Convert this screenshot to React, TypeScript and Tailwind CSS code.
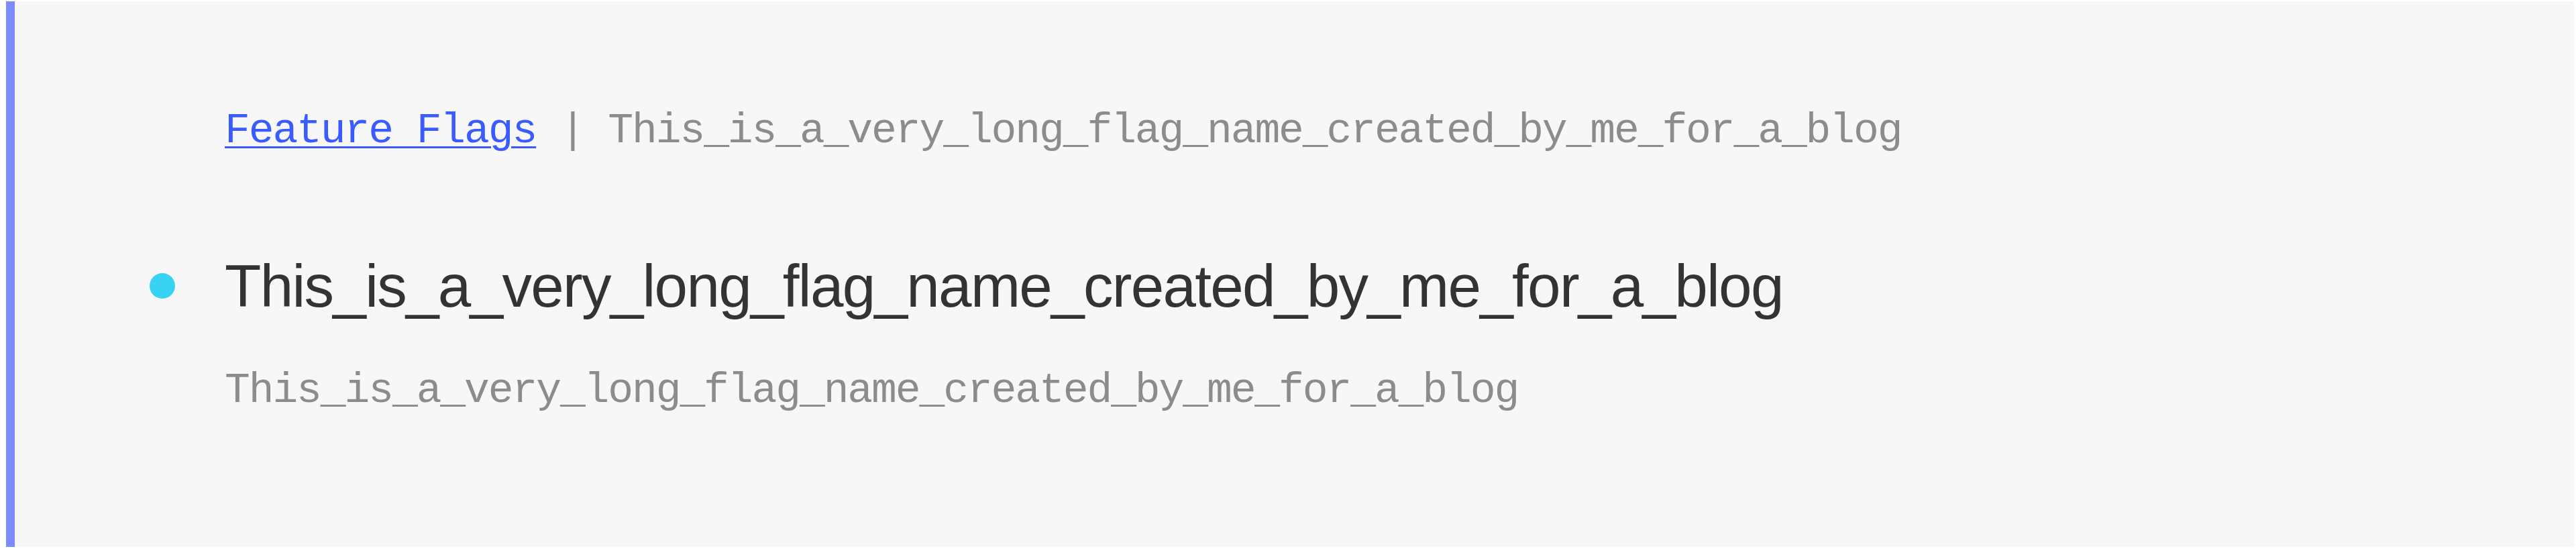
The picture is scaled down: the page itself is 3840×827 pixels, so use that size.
export default function App() {
  const name = "This_is_a_very_long_flag_name_created_by_me_for_a_blog";
  const mono = "font-['Liberation_Mono',_'DejaVu_Sans_Mono',_monospace] text-[63px] leading-[72px] tracking-[-2.1px]";
  return (
    <div className="bg-white pl-[9px] pr-[3px] pt-[2px] pb-[12px]">
      <div className="bg-[#f7f7f7] border-l-[13px] border-[#7c8cff] h-[813px] pl-[201px] pt-[158px]">
        <div className="grid grid-cols-[112px_1fr]">
          <div />
          <div className={`${mono} text-[#8c8c8c] whitespace-nowrap`}>
            <a href="#" className="text-[#3a5cff] underline decoration-[3px] underline-offset-[6px]">Feature Flags</a>
            <span> | {name}</span>
          </div>

          <div className="flex items-center mt-[144px]">
            <span className="block w-[38px] h-[38px] rounded-full bg-[#38d3f2]" />
          </div>
          <h1 className="mt-[144px] font-['Liberation_Sans',_Arial,_sans-serif] text-[89px] leading-[100px] tracking-[-1.7px] text-[#333333] whitespace-nowrap">
            {name}
          </h1>

          <div />
          <div className={`${mono} mt-[71px] text-[#8c8c8c] whitespace-nowrap`}>{name}</div>
        </div>
      </div>
    </div>
  );
}
